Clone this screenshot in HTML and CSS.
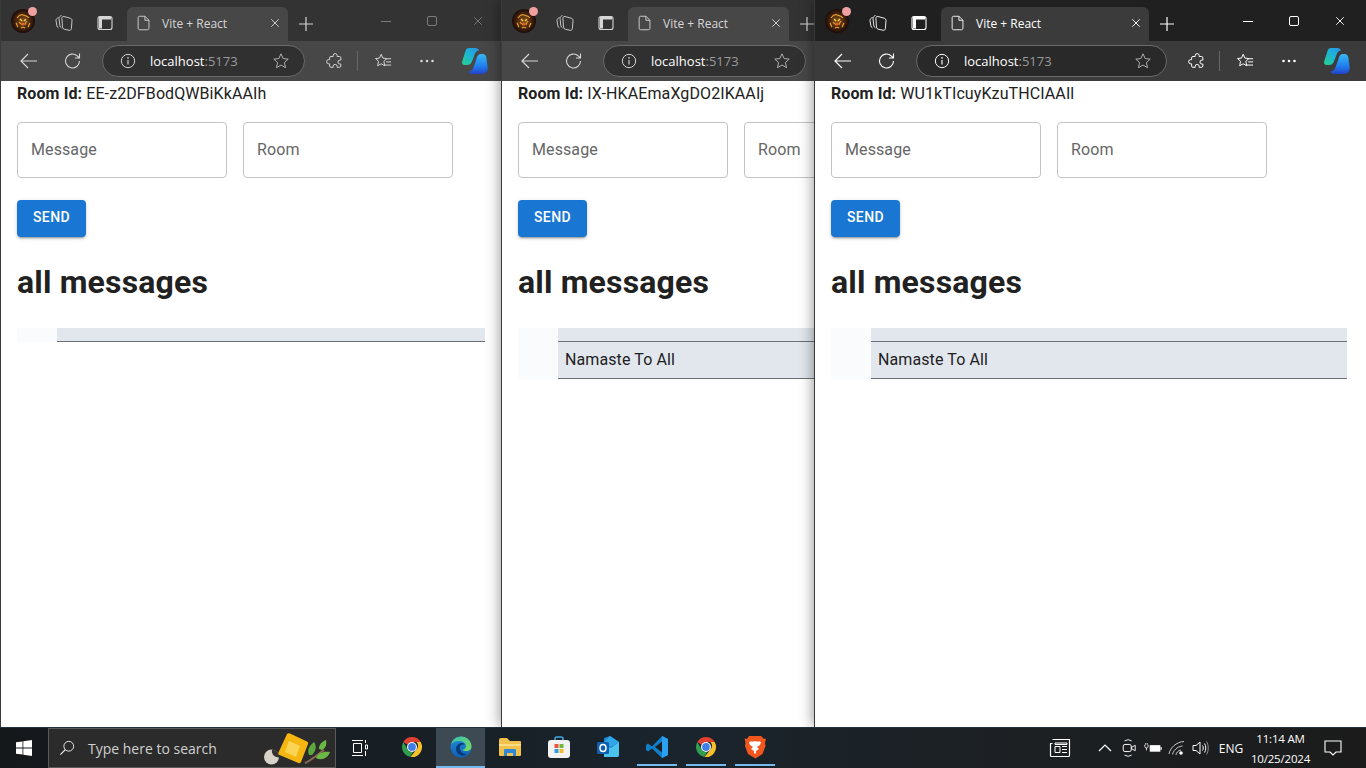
FILE: index.html
```html
<!DOCTYPE html>
<html lang="en">
<head>
  <meta charset="UTF-8" />
  <title>Vite + React</title>
  <link rel="stylesheet" href="styles.css">
</head>
<body>
  <svg class="defs" width="0" height="0">
    <defs>
      <linearGradient id="cpA" x1="0" y1="1" x2="1" y2="0"><stop offset="0" stop-color="#28d08a"/><stop offset=".55" stop-color="#1cb4d8"/><stop offset="1" stop-color="#2a8fe8"/></linearGradient>
      <linearGradient id="cpB" x1="0" y1="0" x2="0" y2="1"><stop offset="0" stop-color="#38b8f5"/><stop offset=".6" stop-color="#1f80ee"/><stop offset="1" stop-color="#2440c8"/></linearGradient>
      <linearGradient id="edgeA" x1="0" y1="0" x2="1" y2="1"><stop offset="0" stop-color="#35c1b0"/><stop offset="1" stop-color="#7fd858"/></linearGradient>
      <linearGradient id="edgeB" x1="0" y1="0" x2="0" y2="1"><stop offset="0" stop-color="#1f8fd8"/><stop offset="1" stop-color="#0e5fb8"/></linearGradient>
      <radialGradient id="av"><stop offset="0" stop-color="#8a5416"/><stop offset=".6" stop-color="#4a2410"/><stop offset="1" stop-color="#190c08"/></radialGradient>

      <symbol id="i-avatar" viewBox="0 0 24 24"><circle cx="12" cy="12" r="12" fill="url(#av)"/><path d="M6 9c2-3 4-4 6-3s4 0 6 3M8 13c1 2 2 1 3 3M16 12c-1 2-2 2-2 4M10 19c1-1 3-1 4 0M5 14c1 1 1 3 2 4M19 14c-1 1-1 3-2 4" fill="none" stroke="#e0a030" stroke-width="1.200"/><path d="M9 10l2 2M15 10l-2 2" stroke="#f5d060" stroke-width="1.400"/><circle cx="12" cy="15" r="1.500" fill="#e85a30"/></symbol>
      <symbol id="i-coll" viewBox="0 0 18 18"><g fill="none" stroke="currentColor" stroke-width=".9"><path d="M3.500 3.500C2 4 1 5 1 6.500l.8 5c.2 1.300.8 2 1.700 2.500"/><path d="M6.500 1.500C5 2 4 3 4 4.500l.8 7c.1 1.200.8 2 1.700 2.500"/><path d="M9 2.500l6.500 1.800c.9.3 1.500 1 1.500 2l-.6 8.200c-.1 1.300-1 2-2.200 1.800l-5-1.100c-1-.2-1.600-1-1.700-2l-.6-8.700C6.800 3 7.700 2.200 9 2.500z"/></g></symbol>
      <symbol id="i-vtab" viewBox="0 0 18 18"><rect x="2" y="2.500" width="14" height="13" rx="2" fill="none" stroke="currentColor" stroke-width="1.100"/><path d="M3 3h12v2.500H6v9H3z" fill="currentColor"/></symbol>
      <symbol id="i-page" viewBox="0 0 20 20"><path d="M5 2.500h6l4.500 4.500v9c0 .8-.7 1.500-1.500 1.500H5c-.8 0-1.500-.7-1.500-1.500V4c0-.8.7-1.500 1.500-1.500zM11 2.500V7h4.500" fill="none" stroke="currentColor"/></symbol>
      <symbol id="i-x" viewBox="0 0 12 12"><path d="M1.500 1.500l9 9M10.500 1.500l-9 9" stroke="currentColor" stroke-width="1.100" fill="none"/></symbol>
      <symbol id="i-plus" viewBox="0 0 16 16"><path d="M8 1v14M1 8h14" stroke="currentColor" stroke-width="1.200" fill="none"/></symbol>
      <symbol id="i-back" viewBox="0 0 20 20"><path d="M2 10h16M9 3l-7 7 7 7" stroke="currentColor" stroke-width="1.200" fill="none"/></symbol>
      <symbol id="i-reload" viewBox="0 0 20 20"><path d="M16.500 10a7 7 0 1 1-2.300-5.200l2.300 2.200M16.500 2.500V7H12" stroke="currentColor" stroke-width="1.100" fill="none"/></symbol>
      <symbol id="i-info" viewBox="0 0 18 18"><circle cx="9" cy="9" r="7.500" fill="none" stroke="currentColor" stroke-width="1.100"/><path d="M9 8v5" stroke="currentColor" stroke-width="1.300"/><circle cx="9" cy="5.500" r=".9" fill="currentColor"/></symbol>
      <symbol id="i-star" viewBox="0 0 20 20"><path d="M10 2l2.400 5.300 5.600.6-4.200 3.800 1.200 5.700L10 14.500l-5 2.900 1.200-5.700L2 7.900l5.600-.6z" fill="none" stroke="currentColor"/></symbol>
      <symbol id="i-ext" viewBox="0 0 20 20"><path d="M8 4a2.200 2.200 0 0 1 4.400 0v1h2.600a1.500 1.500 0 0 1 1.500 1.500V9h-1a2.200 2.200 0 0 0 0 4.400h1v2.100a1.500 1.500 0 0 1-1.500 1.500h-2.600v-1a2.200 2.200 0 0 0-4.400 0v1H5.500A1.500 1.500 0 0 1 4 15.500v-2.400H3a2.300 2.300 0 0 1 0-4.600h1V6.500A1.500 1.500 0 0 1 5.500 5H8z" fill="none" stroke="currentColor" stroke-width="1.100"/></symbol>
      <symbol id="i-fav" viewBox="0 0 20 20"><path d="M8 2.500l1.900 4.300 4.400.5-3.300 3 .9 5L8 13.100l-3.900 2.200.9-5-3.300-3 4.400-.5zM13.500 7.500h5.500M13.500 11h5.500M11.500 14.500H19" fill="none" stroke="currentColor" stroke-width="1.100"/></symbol>
      <symbol id="i-more" viewBox="0 0 16 4"><circle cx="2.500" cy="2" r="1.300" fill="currentColor"/><circle cx="8" cy="2" r="1.300" fill="currentColor"/><circle cx="13.500" cy="2" r="1.300" fill="currentColor"/></symbol>
      <symbol id="i-copilot" viewBox="0 0 26 26"><path d="M7 0h6c2.500 0 3.500 1 4 2.500-2.500.5-3.500 1.500-4.200 3.500L10 13.500C9 16 7.500 17 5 17H2.500C.5 17-.5 15.500 .3 13L3.500 3C4 1 5 0 7 0z" fill="url(#cpA)"/><path d="M19 6h1.500c2 0 3.200 1 3.800 3l1.300 10c.6 4-1.600 7-5.100 7H10c-2 0-3-1-3.500-2.500 2.500-.2 4-1.500 4.800-3.500l3-8.500C15 8 16.500 6 19 6z" fill="url(#cpB)"/></symbol>

      <symbol id="i-search" viewBox="0 0 18 18"><circle cx="11" cy="7" r="5.500" fill="none" stroke="currentColor" stroke-width="1.100"/><path d="M7 11l-5.500 5.500" stroke="currentColor" stroke-width="1.300"/></symbol>
      <symbol id="i-win" viewBox="0 0 16 16"><path d="M0 2.300l6.500-.9v6.200H0zM7.300 1.300L16 0v7.600H7.300zM0 8.400h6.500v6.200L0 13.700zM7.300 8.400H16V16l-8.700-1.300z" fill="currentColor"/></symbol>
      <symbol id="i-task" viewBox="0 0 16 16"><path d="M0 .5h11M0 15.500h11M1.500 3.500h8v9h-8z" fill="none" stroke="currentColor"/><path d="M13.500 0v3M13.500 5h2v4h-2zM13.500 11v5" stroke="currentColor" fill="none"/></symbol>
      <symbol id="i-chrome" viewBox="0 0 48 48"><path d="M24 4a20 20 0 0 1 17.300 10H24a10 10 0 0 0-9 5.700L6.700 14A20 20 0 0 1 24 4z" fill="#e0402f"/><path d="M6.700 14l8.700 15a10 10 0 0 0 11 4.700L20.700 43.700A20 20 0 0 1 6.700 14z" fill="#2f9e4f"/><path d="M41.300 14A20 20 0 0 1 21 43.800L32.700 29a10 10 0 0 0 0-15z" fill="#f5c02c"/><circle cx="24" cy="24" r="10" fill="#fff"/><circle cx="24" cy="24" r="7.800" fill="#3f7fe8"/></symbol>
      <symbol id="i-edge" viewBox="0 0 48 48"><circle cx="24" cy="24" r="21" fill="url(#edgeB)"/><path d="M4 20C6 10 14 3 24 3c12 0 21 9 21 20 0 6-5 9-10 9-4 0-7-1-8-3 4 0 7-3 7-7 0-6-7-10-14-10C13 12 6 15 4 20z" fill="url(#edgeA)"/><path d="M14 28c0-7 5-12 12-12 3 0 4 1 5 3-6-1-11 3-9 10 1 5 6 9 13 9-3 3-7 4-10 3-7-2-11-7-11-13z" fill="#0b3a78"/></symbol>
      <symbol id="i-folder" viewBox="0 0 24 24"><path d="M1 5a2 2 0 0 1 2-2h6l3 3h10a1 1 0 0 1 1 1v13a1 1 0 0 1-1 1H2a1 1 0 0 1-1-1z" fill="#f0c14b"/><path d="M1 9h22v2H1z" fill="#f8dc85"/><path d="M6 21v-6a1 1 0 0 1 1-1h10a1 1 0 0 1 1 1v6h-3v-3H9v3z" fill="#2d89d8"/></symbol>
      <symbol id="i-store" viewBox="0 0 24 24"><path d="M8 6V4a2 2 0 0 1 2-2h4a2 2 0 0 1 2 2v2" fill="none" stroke="#3fa9e8" stroke-width="1.500"/><rect x="1" y="5" width="22" height="18" rx="3" fill="#f2f2f2"/><rect x="7.500" y="9" width="4" height="4" fill="#e8553f"/><rect x="12.500" y="9" width="4" height="4" fill="#6fb83c"/><rect x="7.500" y="14" width="4" height="4" fill="#2d9be0"/><rect x="12.500" y="14" width="4" height="4" fill="#f5bb2c"/></symbol>
      <symbol id="i-outlook" viewBox="0 0 24 24"><path d="M8 3l6-2 9 6v13a2 2 0 0 1-2 2H10l-2-2z" fill="#1c7fd0"/><path d="M14 1l9 6-8 5-7-5z" fill="#2ea6e8"/><path d="M8 9l7 4 8-6v13a2 2 0 0 1-2 2H8z" fill="#4cc2ee"/><rect x="1" y="7" width="12" height="12" rx="1.500" fill="#0f5fae"/><ellipse cx="7" cy="13" rx="3" ry="3.500" fill="none" stroke="#fff" stroke-width="1.500"/></symbol>
      <symbol id="i-code" viewBox="0 0 24 24"><path d="M17 1l6 3v16l-6 3-10-9.500-4 3-2-1.500V10l2-1.500 4 3z" fill="#0f7fcb"/><path d="M17 6.500v11L10 12z" fill="#1a1f26"/><path d="M17 1l6 3v16l-6 3z" fill="#2b9ff0"/></symbol>
      <symbol id="i-brave" viewBox="0 0 24 24"><path d="M6 1h12l3 3 2-.500-1 4.500.500 3-3 8-7 4.500L5 19 2 11l.500-3-1-4.500L4 4z" fill="#f0561d"/><path d="M12 6c-2 1-4 0-6 1l1 3 3 2-2 2 3 2v2l1 1 1-1v-2l3-2-2-2 3-2 1-3c-2-1-4 0-6-1z" fill="#fff"/></symbol>
      <symbol id="i-news" viewBox="0 0 24 20"><path d="M3.500 1.500h17v16a1 1 0 0 1-1 1h-17a1 1 0 0 1-1-1v-12h2" fill="none" stroke="currentColor" stroke-width="1.200"/><path d="M6 5h12v1.500H6zM6 8.500h5v6H6zM13 8.500h5M13 11.500h5M13 14.500h5" fill="none" stroke="currentColor"/></symbol>
      <symbol id="i-chev" viewBox="0 0 14 8"><path d="M1 7l6-6 6 6" fill="none" stroke="currentColor" stroke-width="1.200"/></symbol>
      <symbol id="i-meet" viewBox="0 0 18 22"><path d="M4 3a7 7 0 0 1 8 0M4 19a7 7 0 0 0 8 0" fill="none" stroke="currentColor"/><rect x="2.500" y="7" width="9" height="8" rx="2" fill="none" stroke="currentColor" stroke-width="1.100"/><path d="M12 10l4-2v6l-4-2z" fill="none" stroke="currentColor"/></symbol>
      <symbol id="i-batt" viewBox="0 0 22 14"><path d="M1 3v2a2 2 0 0 0 4 0V3M2 1v2M4 1v2M3 7v3" fill="none" stroke="currentColor"/><rect x="7" y="3.500" width="13" height="8" fill="currentColor"/><path d="M21 6v3" stroke="currentColor" stroke-width="1.500"/></symbol>
      <symbol id="i-wifi" viewBox="0 0 18 16"><path d="M1 14C2 8 8 2 16 1.500M4.500 14.500C5 11 9 6.500 14.500 6M8 15c0-2 2-4.500 5-5" fill="none" stroke="currentColor" opacity=".75"/><circle cx="13" cy="13" r="1.800" fill="currentColor"/></symbol>
      <symbol id="i-vol" viewBox="0 0 18 16"><path d="M1 5.500h3L8 2v12l-4-3.500H1z" fill="none" stroke="currentColor"/><path d="M10.500 5.500c1 1.500 1 3.500 0 5M12.500 3.500c1.700 2.500 1.700 6.500 0 9" fill="none" stroke="currentColor"/><path d="M14.500 1.500c2.300 3.500 2.300 9.500 0 13" fill="none" stroke="currentColor" opacity=".5"/></symbol>
      <symbol id="i-note" viewBox="0 0 18 16"><path d="M1 1h16v11h-5l-3 3-3-3H1z" fill="none" stroke="currentColor" stroke-width="1.100"/></symbol>
      <symbol id="i-mascot" viewBox="0 0 68 33"><circle cx="7.500" cy="25" r="7.500" fill="#d8d2c8"/><path d="M8 17.500a7.500 7.500 0 0 1 7 8c-4 0-8-3-7-8z" fill="#33332f"/><path d="M23 2c1-1 2-1 3-.5l17 8c1 .5 1.500 1.500 1 2.500l-7 18c-.5 1-1.500 1.500-2.500 1L15.500 23c-1-.5-1.500-1.500-1-2.500z" fill="#f5b612"/><path d="M25 9l11 5-4 11-11-5z" fill="#fbd455"/><path d="M41 31c5-2 12-8 19-13" stroke="#8d6a50" stroke-width="2" fill="none"/><path d="M45 23c-2-5 0-9 5-13 3 4 2 9-2 13z" fill="#5da83c"/><path d="M52 26c2-5 7-7 14-6-2 6-8 9-14 6zM55 17c0-4 2-7 7-9 1 4 0 8-4 10z" fill="#6cb845"/></symbol>
    </defs>
  </svg>

  <div class="window win-one">
    <div class="titlebar">
      <div class="avatar"><svg class="i24"><use href="#i-avatar"/></svg><span class="badge"></span></div>
      <span class="tb-btn"><svg class="i18"><use href="#i-coll"/></svg></span>
      <span class="tb-btn"><svg class="i18"><use href="#i-vtab"/></svg></span>
      <div class="tab">
        <svg class="i18"><use href="#i-page"/></svg>
        <span class="tab-title">Vite + React</span>
        <svg class="i10 tab-close"><use href="#i-x"/></svg>
      </div>
      <span class="new-tab"><svg class="i14"><use href="#i-plus"/></svg></span>
      <div class="caption">
        <span class="cap-btn"><span class="cap-min"></span></span>
        <span class="cap-btn"><span class="cap-max"></span></span>
        <span class="cap-btn"><svg class="i10"><use href="#i-x"/></svg></span>
      </div>
    </div>
    <div class="toolbar">
      <span class="nav-btn"><svg class="i20"><use href="#i-back"/></svg></span>
      <span class="nav-btn"><svg class="i20"><use href="#i-reload"/></svg></span>
      <div class="address">
        <svg class="i16"><use href="#i-info"/></svg>
        <span class="url"><b>localhost</b>:5173</span>
        <svg class="i18 addr-star"><use href="#i-star"/></svg>
      </div>
      <span class="tool-btn"><svg class="i18"><use href="#i-ext"/></svg></span>
      <span class="tool-sep"></span>
      <span class="tool-btn"><svg class="i18"><use href="#i-fav"/></svg></span>
      <span class="tool-btn"><svg class="more"><use href="#i-more"/></svg></span>
      <span class="tool-btn copilot"><svg class="i26"><use href="#i-copilot"/></svg></span>
    </div>
    <div class="page">
      <p class="room-id"><strong>Room Id:</strong> EE-z2DFBodQWBiKkAAIh</p>
      <div class="fields">
        <div class="field">Message</div>
        <div class="field">Room</div>
      </div>
      <button class="send">Send</button>
      <h1>all messages</h1>
      <table class="messages">
        <tr class="head"><td class="gutter"></td><td class="cell"></td></tr>
      </table>
    </div>
  </div>

  <div class="window win-two">
    <div class="titlebar">
      <div class="avatar"><svg class="i24"><use href="#i-avatar"/></svg><span class="badge"></span></div>
      <span class="tb-btn"><svg class="i18"><use href="#i-coll"/></svg></span>
      <span class="tb-btn"><svg class="i18"><use href="#i-vtab"/></svg></span>
      <div class="tab">
        <svg class="i18"><use href="#i-page"/></svg>
        <span class="tab-title">Vite + React</span>
        <svg class="i10 tab-close"><use href="#i-x"/></svg>
      </div>
      <span class="new-tab"><svg class="i14"><use href="#i-plus"/></svg></span>
    </div>
    <div class="toolbar">
      <span class="nav-btn"><svg class="i20"><use href="#i-back"/></svg></span>
      <span class="nav-btn"><svg class="i20"><use href="#i-reload"/></svg></span>
      <div class="address">
        <svg class="i16"><use href="#i-info"/></svg>
        <span class="url"><b>localhost</b>:5173</span>
        <svg class="i18 addr-star"><use href="#i-star"/></svg>
      </div>
    </div>
    <div class="page">
      <p class="room-id"><strong>Room Id:</strong> IX-HKAEmaXgDO2IKAAIj</p>
      <div class="fields">
        <div class="field">Message</div>
        <div class="field">Room</div>
      </div>
      <button class="send">Send</button>
      <h1>all messages</h1>
      <table class="messages">
        <tr class="head"><td class="gutter" rowspan="2"></td><td class="cell"></td></tr>
        <tr class="row"><td class="cell">Namaste To All</td></tr>
      </table>
    </div>
  </div>

  <div class="window win-three">
    <div class="titlebar">
      <div class="avatar"><svg class="i24"><use href="#i-avatar"/></svg><span class="badge"></span></div>
      <span class="tb-btn"><svg class="i18"><use href="#i-coll"/></svg></span>
      <span class="tb-btn"><svg class="i18"><use href="#i-vtab"/></svg></span>
      <div class="tab">
        <svg class="i18"><use href="#i-page"/></svg>
        <span class="tab-title">Vite + React</span>
        <svg class="i10 tab-close"><use href="#i-x"/></svg>
      </div>
      <span class="new-tab"><svg class="i14"><use href="#i-plus"/></svg></span>
      <div class="caption">
        <span class="cap-btn"><span class="cap-min"></span></span>
        <span class="cap-btn"><span class="cap-max"></span></span>
        <span class="cap-btn"><svg class="i10"><use href="#i-x"/></svg></span>
      </div>
    </div>
    <div class="toolbar">
      <span class="nav-btn"><svg class="i20"><use href="#i-back"/></svg></span>
      <span class="nav-btn"><svg class="i20"><use href="#i-reload"/></svg></span>
      <div class="address">
        <svg class="i16"><use href="#i-info"/></svg>
        <span class="url"><b>localhost</b>:5173</span>
        <svg class="i18 addr-star"><use href="#i-star"/></svg>
      </div>
      <span class="tool-btn"><svg class="i18"><use href="#i-ext"/></svg></span>
      <span class="tool-sep"></span>
      <span class="tool-btn"><svg class="i18"><use href="#i-fav"/></svg></span>
      <span class="tool-btn"><svg class="more"><use href="#i-more"/></svg></span>
      <span class="tool-btn copilot"><svg class="i26"><use href="#i-copilot"/></svg></span>
    </div>
    <div class="page">
      <p class="room-id"><strong>Room Id:</strong> WU1kTIcuyKzuTHCIAAIl</p>
      <div class="fields">
        <div class="field">Message</div>
        <div class="field">Room</div>
      </div>
      <button class="send">Send</button>
      <h1>all messages</h1>
      <table class="messages">
        <tr class="head"><td class="gutter" rowspan="2"></td><td class="cell"></td></tr>
        <tr class="row"><td class="cell">Namaste To All</td></tr>
      </table>
    </div>
  </div>

  <div class="taskbar">
    <span class="start"><svg class="i16"><use href="#i-win"/></svg></span>
    <div class="search">
      <svg class="i16"><use href="#i-search"/></svg>
      <span class="search-text">Type here to search</span>
      <svg class="mascot"><use href="#i-mascot"/></svg>
    </div>
    <span class="task-view"><svg class="i16"><use href="#i-task"/></svg></span>
    <span class="app"><svg class="i24"><use href="#i-chrome"/></svg></span>
    <span class="app active"><svg class="i24"><use href="#i-edge"/></svg></span>
    <span class="app"><svg class="i24"><use href="#i-folder"/></svg></span>
    <span class="app"><svg class="i24"><use href="#i-store"/></svg></span>
    <span class="app"><svg class="i24"><use href="#i-outlook"/></svg></span>
    <span class="app running"><svg class="i24"><use href="#i-code"/></svg></span>
    <span class="app running"><svg class="i24"><use href="#i-chrome"/></svg></span>
    <span class="app running"><svg class="i24"><use href="#i-brave"/></svg></span>
    <div class="tray">
      <span class="tray-news"><svg class="news"><use href="#i-news"/></svg></span>
      <span class="tray-item"><svg class="chev"><use href="#i-chev"/></svg></span>
      <span class="tray-item"><svg class="meet"><use href="#i-meet"/></svg></span>
      <span class="tray-item"><svg class="batt"><use href="#i-batt"/></svg></span>
      <span class="tray-item"><svg class="wifi"><use href="#i-wifi"/></svg></span>
      <span class="tray-item"><svg class="wifi"><use href="#i-vol"/></svg></span>
      <span class="lang">ENG</span>
      <span class="clock"><span>11:14 AM</span><span>10/25/2024</span></span>
      <span class="notify"><svg class="note"><use href="#i-note"/></svg></span>
    </div>
  </div>
</body>
</html>
```

FILE: styles.css
```css
* {
  box-sizing: border-box;
}
html, body {
  margin: 0;
  height: 100%;
  overflow: hidden;
}
body {
  position: relative;
  width: 1366px;
  height: 768px;
  background: #fff;
  font-family: Roboto, sans-serif;
  color: #212121;
}
.defs {
  position: absolute;
}
svg {
  display: block;
  flex: none;
}
.i10 { width: 10px; height: 10px; }
.i14 { width: 16px; height: 16px; }
.i16 { width: 16px; height: 16px; }
.i18 { width: 18px; height: 18px; }
.i20 { width: 20px; height: 20px; }
.i24 { width: 24px; height: 24px; }
.i26 { width: 26px; height: 26px; }
.more { width: 16px; height: 4px; }

/* windows on the desktop */
.window {
  position: absolute;
  top: 0;
  height: 727px;
  background: #fff;
  overflow: hidden;
  border-left: 1px solid #3a3a3a;
  box-shadow: 0 0 14px rgba(0,0,0,0.45);
  --title-bg: #333333;
  --tab-bg: #474747;
  --tool-bg: #474747;
  --addr-bg: #303030;
  --fg: #d6d6d6;
}
.win-one { left: 0; width: 502px; z-index: 1; }
.win-two { left: 501px; width: 502px; z-index: 2; }
.win-three {
  left: 814px;
  width: 552px;
  z-index: 3;
  --title-bg: #202020;
  --tab-bg: #3b3b3b;
  --tool-bg: #3b3b3b;
  --addr-bg: #292929;
  --fg: #ffffff;
}

.titlebar {
  height: 41px;
  padding-top: 7px;
  background: var(--title-bg);
  display: flex;
  align-items: stretch;
  color: var(--fg);
}
.avatar {
  position: relative;
  width: 24px;
  height: 24px;
  margin: 2px 0 0 10px;
  flex: none;
}
.badge {
  position: absolute;
  top: -2px;
  right: -2px;
  width: 9px;
  height: 9px;
  border-radius: 50%;
  background: #f0a0a0;
}
.tb-btn {
  width: 41px;
  display: flex;
  align-items: center;
  justify-content: center;
  margin-bottom: 2px;
  flex: none;
}
.avatar + .tb-btn {
  margin-left: 8px;
}
.tab {
  width: 161px;
  margin-left: 2px;
  padding: 0 8px 2px 8px;
  background: var(--tab-bg);
  border-radius: 6px 6px 0 0;
  display: flex;
  align-items: center;
  gap: 9px;
  flex: none;
}
.win-three .tab {
  width: 208px;
}
.tab-title {
  flex: 1;
  font: 12px "Open Sans", sans-serif;
  white-space: nowrap;
}
.new-tab {
  width: 36px;
  display: flex;
  align-items: center;
  justify-content: center;
  flex: none;
}
.caption {
  display: flex;
  margin-left: auto;
  margin-bottom: 6px;
  margin-right: 1px;
}
.win-three .caption {
  margin-right: 3px;
}
.win-one .caption,
.win-two .caption {
  opacity: 0.45;
}
.cap-btn {
  width: 46px;
  display: flex;
  align-items: center;
  justify-content: center;
}
.cap-min {
  width: 10px;
  border-top: 1px solid currentColor;
}
.cap-max {
  width: 10px;
  height: 10px;
  border: 1px solid currentColor;
  border-radius: 2px;
}

.toolbar {
  height: 40px;
  padding-left: 6px;
  background: var(--tool-bg);
  display: flex;
  align-items: center;
  color: var(--fg);
}
.nav-btn {
  width: 44px;
  display: flex;
  justify-content: center;
  flex: none;
}
.address {
  width: 203px;
  height: 32px;
  margin-left: 7px;
  padding: 0 14px 0 17px;
  background: var(--addr-bg);
  border: 1px solid #6a6a6a;
  border-radius: 16px;
  display: flex;
  align-items: center;
  flex: none;
}
.win-three .address {
  width: 251px;
}
.url {
  flex: 1;
  margin-left: 14px;
  font: 13px "Open Sans", sans-serif;
  color: #9a9a9a;
}
.url b {
  font-weight: 400;
  color: #fff;
}
.addr-star {
  color: #bdbdbd;
}
.tool-btn {
  width: 44px;
  display: flex;
  justify-content: center;
  flex: none;
}
.address + .tool-btn {
  margin-left: 8px;
}
.tool-sep {
  width: 1px;
  height: 20px;
  margin-right: 3px;
  background: #666;
  flex: none;
}
.copilot {
  margin-left: 4px;
}

/* page content */
.page {
  padding: 0 17px 0 16px;
  letter-spacing: 0.1px;
}
.win-three .page {
  padding-right: 19px;
}
.room-id {
  margin: 0;
  height: 41px;
  padding-top: 3px;
  font-size: 16px;
  line-height: 19px;
}
.fields {
  display: flex;
  gap: 16px;
  width: 1000px;
}
.field {
  width: 210px;
  height: 56px;
  padding: 0 13px;
  border: 1px solid #c4c4c4;
  border-radius: 4px;
  font-size: 16px;
  line-height: 53px;
  color: #666;
}
.send {
  display: block;
  width: 69px;
  height: 37px;
  margin-top: 22px;
  padding: 0 0 4px;
  border: none;
  border-radius: 4px;
  background: #1976d2;
  color: #fff;
  font: 500 14px Roboto, sans-serif;
  letter-spacing: 0.4px;
  text-transform: uppercase;
  box-shadow: 0 3px 1px -2px rgba(0,0,0,0.2), 0 2px 2px rgba(0,0,0,0.14), 0 1px 5px rgba(0,0,0,0.12);
}
h1 {
  margin: 26px 0 27px;
  font-size: 32px;
  line-height: 38px;
  font-weight: 700;
  letter-spacing: 0.17px;
}
.messages {
  width: 100%;
  border-collapse: separate;
  border-spacing: 0;
  table-layout: fixed;
  font-size: 16px;
}
.win-two .messages {
  width: 500px;
}
.messages td {
  padding: 0;
}
.messages .gutter {
  width: 40px;
  background: #fafbfc;
}
.messages .cell {
  background: #e2e7ee;
  border-bottom: 1px solid #6b7078;
}
.head .cell {
  height: 14px;
}
.row .cell {
  height: 37px;
  padding: 0 0 2px 7px;
}

/* taskbar */
.taskbar {
  position: absolute;
  left: 0;
  bottom: 0;
  z-index: 5;
  width: 100%;
  height: 41px;
  background: linear-gradient(90deg, #14181b 0, #1a242c 50%, #1c2023 75%, #1b1b1b 100%);
  border-top: 1px solid #22303a;
  display: flex;
  align-items: stretch;
  color: #fff;
}
.start {
  width: 48px;
  display: flex;
  align-items: center;
  justify-content: center;
  flex: none;
}
.search {
  width: 288px;
  padding-left: 10px;
  background: #2b2b2b;
  border: 1px solid #5a5a5a;
  display: flex;
  align-items: center;
  flex: none;
}
.search .i16 {
  color: #e6e6e6;
}
.search-text {
  margin-left: 13px;
  font: 14px "Open Sans", sans-serif;
  color: #d0d0d0;
}
.mascot {
  width: 68px;
  height: 33px;
  margin-left: auto;
  margin-right: 3px;
}
.task-view {
  width: 51px;
  padding-right: 3px;
  display: flex;
  align-items: center;
  justify-content: center;
  flex: none;
}
.app {
  width: 49px;
  display: flex;
  align-items: center;
  justify-content: center;
  border-bottom: 2px solid transparent;
  flex: none;
}
.app.active {
  background: #3d4a53;
  border-bottom-color: #76b9ed;
}
.app.running {
  background: linear-gradient(#76b9ed, #76b9ed) center bottom / 40px 2px no-repeat;
}
.tray {
  margin-left: auto;
  display: flex;
  align-items: center;
  padding-right: 11px;
}
.tray-news {
  width: 44px;
  margin-right: 10px;
  display: flex;
  justify-content: center;
}
.tray-item {
  width: 24px;
  display: flex;
  justify-content: center;
}
.news { width: 24px; height: 20px; }
.chev { width: 14px; height: 8px; }
.meet { width: 16px; height: 20px; }
.batt { width: 18px; height: 12px; }
.wifi { width: 18px; height: 16px; }
.note { width: 18px; height: 16px; }
.lang {
  width: 36px;
  text-align: center;
  font: 12px "Open Sans", sans-serif;
}
.clock {
  width: 62px;
  padding: 2px 0 0 1px;
  display: flex;
  flex-direction: column;
  align-items: center;
  gap: 4px;
  font: 11.5px/16px "Open Sans", sans-serif;
  letter-spacing: -0.2px;
  white-space: nowrap;
}
.notify {
  width: 44px;
  display: flex;
  justify-content: center;
}
```
